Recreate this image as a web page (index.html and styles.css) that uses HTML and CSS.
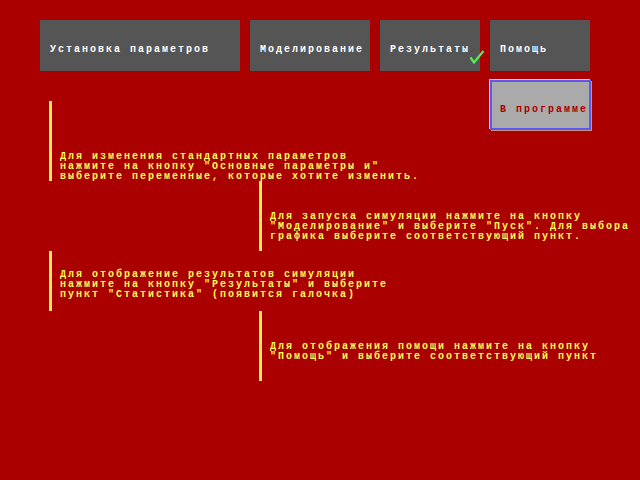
FILE: index.html
```html
<!DOCTYPE html>
<html lang="ru">
<head>
<meta charset="utf-8">
<title>Помощь</title>
<link rel="stylesheet" href="styles.css">
</head>
<body>
<nav class="menu">
  <div class="btn btn-wide">Установка параметров</div>
  <div class="btn btn-model">Моделирование</div>
  <div class="btn btn-res">Результаты
    <svg class="check" width="16" height="14" viewBox="0 0 16 14"><path d="M1.5 7.5 L5 12.5 L14.5 1" fill="none" stroke="#55ee55" stroke-width="2.2"/></svg>
  </div>
  <div class="btn btn-help">Помощь</div>
</nav>
<main class="content">
  <div class="about">В программе</div>
  <section class="note note-left n1">Для изменения стандартных параметров<br>нажмите на кнопку "Основные параметры и"<br>выберите переменные, которые хотите изменить.</section>
  <section class="note note-right n2">Для запуска симуляции нажмите на кнопку<br>"Моделирование" и выберите "Пуск". Для выбора<br>графика выберите соответствующий пункт.</section>
  <section class="note note-left n3">Для отображение результатов симуляции<br>нажмите на кнопку "Результаты" и выберите<br>пункт "Статистика" (появится галочка)</section>
  <section class="note note-right n4">Для отображения помощи нажмите на кнопку<br>"Помощь" и выберите соответствующий пункт</section>
</main>
</body>
</html>
```
FILE: styles.css
```css
html, body {
  margin: 0;
  padding: 0;
}
body {
  background: #aa0000;
  width: 640px;
  height: 480px;
  overflow: hidden;
  font-family: "Liberation Mono", "DejaVu Sans Mono", monospace;
  font-weight: bold;
  font-size: 10px;
  letter-spacing: 2px;
  line-height: 10px;
  white-space: nowrap;
}
.menu {
  display: flex;
  gap: 10px;
  padding: 20px 0 0 40px;
}
.btn {
  position: relative;
  box-sizing: border-box;
  height: 51px;
  padding: 25px 10px 0;
  background: #555555;
  color: #ffffff;
}
.btn-wide { width: 200px; }
.btn-model { width: 120px; }
.btn-res { width: 100px; }
.btn-help { width: 100px; }
.check {
  position: absolute;
  left: 89px;
  top: 30px;
}
.content {
  padding-top: 9px;
}
.about {
  float: right;
  box-sizing: border-box;
  width: 101px;
  height: 50px;
  margin: 0 49px 0 0;
  padding: 23px 0 0 8px;
  background: #aaaaaa;
  border: 2px solid #5a5aee;
  box-shadow: -1px -1px 0 0 #ffcc88, 1px 1px 0 0 #d09080;
  color: #aa0000;
}
.note {
  box-sizing: border-box;
  border-left: 3px solid #ffee55;
  padding-left: 8px;
  color: #ffff55;
}
.note-left { margin-left: 49px; }
.note-right { margin-left: 259px; }
.n1 { margin-top: 21px; height: 80px; padding-top: 51px; }
.n2 { height: 70px; padding-top: 31px; }
.n3 { height: 60px; padding-top: 19px; }
.n4 { height: 70px; padding-top: 31px; }
```
